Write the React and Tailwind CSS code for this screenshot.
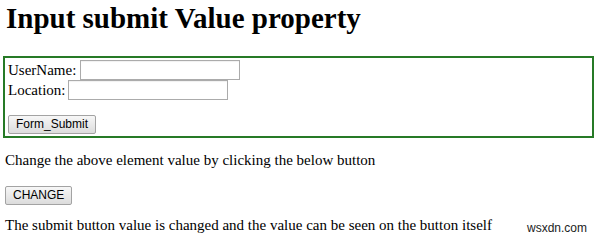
import React from "react";

const serif = "font-['Liberation_Serif','Times_New_Roman',serif]";
const sans = "font-['Liberation_Sans',Arial,sans-serif]";

const FormButton = ({ children }) => (
  <button
    type="button"
    className={`${sans} h-[19px] px-[7px] text-[12px] leading-[17px] text-black border border-[#a3a3a3] rounded-[2px] bg-gradient-to-b from-[#f7f7f7] to-[#dcdcdc]`}
  >
    {children}
  </button>
);

const TextInput = ({ width }) => (
  <input
    type="text"
    className="h-[20px] border border-[#ababab] bg-white shadow-[inset_0_1px_1px_rgba(0,0,0,0.06)] outline-none"
    style={{ width }}
  />
);

const App = () => {
  return (
    <div className={`${serif} relative w-[600px] h-[240px] overflow-hidden bg-white pl-[5px] text-black`}>
      <h1 className="mt-[2px] ml-[1px] text-[29px] leading-[33px] font-bold">
        Input submit Value property
      </h1>

      <form className="mt-[21px] -ml-[2px] w-[591px] border-2 border-[#267a26] pl-[3px] pt-[2px] pb-[2px] text-[15px] leading-[17px]">
        <div className="flex items-center gap-[4px] h-[20px]">
          <span>UserName:</span>
          <TextInput width={160} />
        </div>
        <div className="flex items-center gap-[3px] h-[20px]">
          <span>Location:</span>
          <TextInput width={160} />
        </div>
        <div className="mt-[15px] flex">
          <FormButton>Form_Submit</FormButton>
        </div>
      </form>

      <p className="mt-[14px] text-[15px] leading-[17px]">
        Change the above element value by clicking the below button
      </p>

      <div className="mt-[17px] flex">
        <FormButton>CHANGE</FormButton>
      </div>

      <p className="mt-[12px] text-[15px] leading-[17px]">
        The submit button value is changed and the value can be seen on the button itself
      </p>

      <span className={`${sans} absolute left-[527px] top-[221px] text-[12px] leading-[14px] text-[#222]`}>
        wsxdn.com
      </span>
    </div>
  );
};

export default App;
